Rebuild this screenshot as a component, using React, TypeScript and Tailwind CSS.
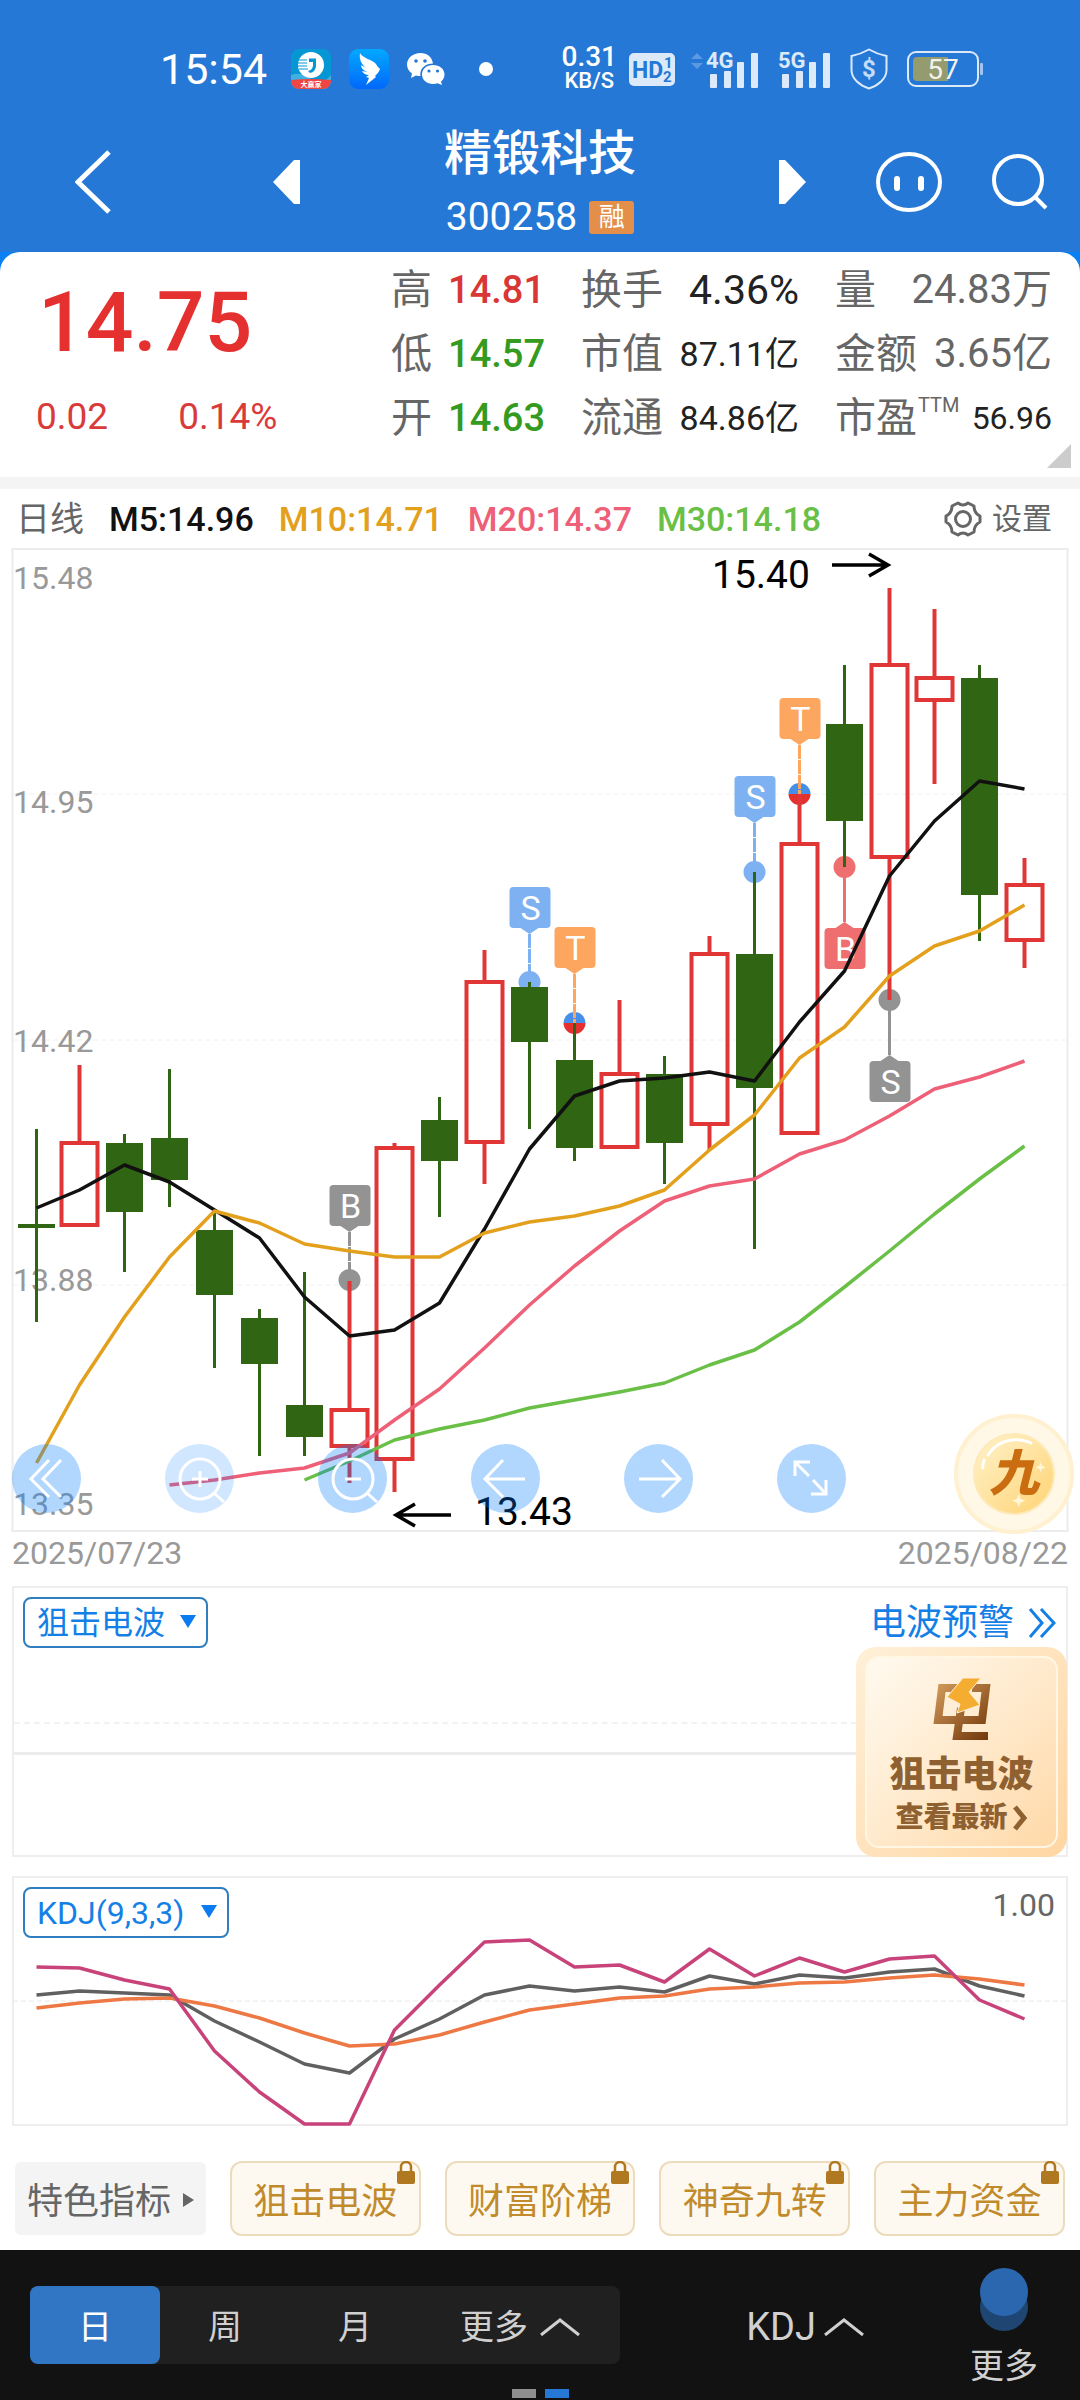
import React from "react";

type Candle = { up: boolean; high: number; top: number; bottom: number; low: number };

const candles: Candle[] = [
  { up: false, high: 1129, top: 1224, bottom: 1228, low: 1322 },
  { up: true, high: 1065, top: 1143, bottom: 1225, low: 1225 },
  { up: false, high: 1134, top: 1143, bottom: 1212, low: 1272 },
  { up: false, high: 1069, top: 1138, bottom: 1180, low: 1207 },
  { up: false, high: 1212, top: 1230, bottom: 1295, low: 1368 },
  { up: false, high: 1309, top: 1318, bottom: 1364, low: 1456 },
  { up: false, high: 1272, top: 1405, bottom: 1437, low: 1456 },
  { up: true, high: 1281, top: 1410, bottom: 1446, low: 1483 },
  { up: true, high: 1143, top: 1148, bottom: 1459, low: 1492 },
  { up: false, high: 1097, top: 1120, bottom: 1161, low: 1217 },
  { up: true, high: 950, top: 982, bottom: 1142, low: 1184 },
  { up: false, high: 982, top: 987, bottom: 1042, low: 1129 },
  { up: false, high: 1023, top: 1060, bottom: 1148, low: 1161 },
  { up: true, high: 1000, top: 1074, bottom: 1147, low: 1147 },
  { up: false, high: 1056, top: 1074, bottom: 1143, low: 1184 },
  { up: true, high: 936, top: 954, bottom: 1124, low: 1150 },
  { up: false, high: 872, top: 954, bottom: 1088, low: 1249 },
  { up: true, high: 794, top: 844, bottom: 1133, low: 1133 },
  { up: false, high: 665, top: 724, bottom: 821, low: 867 },
  { up: true, high: 588, top: 665, bottom: 857, low: 1000 },
  { up: true, high: 609, top: 678, bottom: 700, low: 784 },
  { up: false, high: 665, top: 678, bottom: 895, low: 941 },
  { up: true, high: 858, top: 885, bottom: 940, low: 968 },
];

const ma5 = [1208, 1190, 1165, 1182, 1210, 1238, 1297, 1336, 1330, 1303, 1229, 1149, 1096, 1081, 1078, 1072, 1081, 1022, 971, 876, 821, 781, 789];
const ma10 = [1463, 1385, 1317, 1257, 1211, 1223, 1244, 1251, 1257, 1257, 1233, 1222, 1216, 1206, 1190, 1150, 1115, 1058, 1027, 976, 946, 931, 905];
const ma20 = [1485, 1480, 1473, 1468, 1453, 1420, 1389, 1348, 1305, 1266, 1231, 1201, 1186, 1179, 1154, 1140, 1116, 1089, 1077, 1061];
const ma30 = [1480, 1461, 1440, 1429, 1420, 1408, 1400, 1392, 1383, 1365, 1350, 1322, 1287, 1251, 1214, 1179, 1146];

const lineJ = [1967, 1968, 1980, 1989, 2051, 2092, 2124, 2124, 2030, 1985, 1942, 1940, 1967, 1965, 1982, 1949, 1976, 1958, 1972, 1959, 1956, 2000, 2019];
const lineK = [1995, 1991, 1993, 1995, 2021, 2042, 2064, 2073, 2039, 2019, 1995, 1986, 1991, 1987, 1992, 1976, 1984, 1975, 1978, 1972, 1969, 1986, 1996];
const lineD = [2008, 2003, 1999, 1998, 2006, 2018, 2033, 2046, 2044, 2035, 2022, 2010, 2004, 1998, 1996, 1989, 1987, 1983, 1982, 1978, 1975, 1979, 1985];

const xAt = (i: number) => (i === 0 ? 36.5 : 34.5 + 45 * i);
const toPoints = (ys: number[], start = 0) => ys.map((y, i) => `${xAt(i + start)},${y}`).join(" ");

type MarkerProps = { index: number; letter: string; box: number; dot: number; color: string; split?: boolean };

function Marker({ index, letter, box, dot, color, split }: MarkerProps) {
  const x = xAt(index);
  const below = box > dot;
  const tip = below ? box - 6 : box + 47;
  return (
    <g>
      {split ? (
        <>
          <path d={`M${x - 11} ${dot}a11 11 0 0 1 22 0z`} fill="#458fea" />
          <path d={`M${x - 11} ${dot}a11 11 0 0 0 22 0z`} fill="#e53030" />
        </>
      ) : (
        <circle cx={x} cy={dot} r={11} fill={color} />
      )}
      <line x1={x} x2={x} y1={tip} y2={dot} stroke={color} strokeWidth={3} strokeDasharray={below ? undefined : "14 1"} />
      <rect x={x - 20} y={box} width={41} height={41} rx={4} fill={color} />
      {below ? (
        <path d={`M${x - 9} ${box}L${x} ${tip}L${x + 9} ${box}z`} fill={color} />
      ) : (
        <path d={`M${x - 9} ${box + 41}L${x} ${tip}L${x + 9} ${box + 41}z`} fill={color} />
      )}
      <text x={x + 1} y={box + 33} fontSize={34} textAnchor="middle" fill="#fff">{letter}</text>
    </g>
  );
}

function CandleChart() {
  return (
    <svg viewBox="0 548 1080 983" className="block w-full overflow-visible" role="img" aria-label="日线K线图">
      <rect x={12.5} y={549} width={1055} height={982} fill="none" stroke="#ececec" strokeWidth={2} />
      {[794, 1040, 1285].map((y) => (
        <line key={y} x1={13} x2={1067} y1={y} y2={y} stroke="#f0f0f0" strokeWidth={1} strokeDasharray="5 3" />
      ))}
      <g fontSize={32} fill="#999">
        <text x={13} y={589}>15.48</text>
        <text x={13} y={813}>14.95</text>
        <text x={13} y={1052}>14.42</text>
        <text x={13} y={1291}>13.88</text>
        <text x={13} y={1515}>13.35</text>
      </g>
      <Marker index={7} letter="B" box={1185} dot={1280} color="#939393" />
      <Marker index={11} letter="S" box={887} dot={982} color="#7eb1f1" />
      <Marker index={12} letter="T" box={927} dot={1023} color="#fda660" split />
      <Marker index={16} letter="S" box={776} dot={872} color="#7eb1f1" />
      <Marker index={17} letter="T" box={698} dot={794} color="#fda660" split />
      <Marker index={18} letter="B" box={928} dot={867} color="#ef6f70" />
      <Marker index={19} letter="S" box={1061} dot={1000} color="#939393" />
      {candles.map((c, i) => {
        const x = xAt(i);
        return c.up ? (
          <g key={i} stroke="#e03636" strokeWidth={4} fill="none">
            <line x1={x} x2={x} y1={c.high} y2={c.top} />
            <line x1={x} x2={x} y1={c.bottom} y2={c.low} />
            <rect x={x - 18} y={c.top} width={36} height={c.bottom - c.top} />
          </g>
        ) : (
          <g key={i} fill="#306613">
            <rect x={x - 1.5} y={c.high} width={3} height={c.low - c.high} />
            <rect x={x - 18.5} y={c.top} width={37} height={c.bottom - c.top} />
          </g>
        );
      })}
      <g fill="none" strokeWidth={3.5} strokeLinejoin="round">
        <polyline points={toPoints(ma30, 6)} stroke="#6abf47" />
        <polyline points={toPoints(ma20, 3)} stroke="#ee6077" />
        <polyline points={toPoints(ma5)} stroke="#111" />
        <polyline points={toPoints(ma10)} stroke="#e3a01d" />
      </g>
      <g fill="none" stroke="#000" strokeWidth={3.5}>
        <path d="M832 565H888M869 554L888 565L869 576" />
        <path d="M451 1515H396M415 1504L396 1515L415 1526" />
      </g>
      <g fontSize={39} fill="#000">
        <text x={712} y={588}>15.40</text>
        <text x={475} y={1525}>13.43</text>
      </g>
    </svg>
  );
}

function SignalBars({ label, data }: { label: string; data?: boolean }) {
  return (
    <svg
      viewBox={data ? "0 0 68 40" : "15 0 53 40"}
      className={data ? "h-10 w-[68px]" : "h-10 w-[53px]"}
      aria-label={label}
    >
      {data && <path d="M0 10L6 4L12 10zM0 14L6 20L12 14z" fill="#5b9ae2" />}
      <g fill="#dbe9f9">
        <text x={15} y={19} fontSize={22} fontWeight={700}>{label}</text>
        <rect x={19} y={25} width={7} height={14} rx={1} />
        <rect x={33} y={22} width={7} height={17} rx={1} />
        <rect x={46} y={13} width={7} height={26} rx={1} />
        <rect x={60} y={4} width={7} height={35} rx={1} />
      </g>
    </svg>
  );
}

function StatusBar() {
  return (
    <div className="flex h-[100px] items-center justify-between pt-[38px] pr-[97px] pl-[160px] text-white">
      <div className="flex items-center">
        <span className="mr-6 text-[43px] leading-[50px]">15:54</span>
        <svg viewBox="0 0 40 40" className="mr-[18px] size-10" aria-label="大赢家">
          <defs>
            <clipPath id="appClip"><rect width={40} height={40} rx={8} /></clipPath>
          </defs>
          <g clipPath="url(#appClip)">
            <rect width={40} height={40} fill="#0596d4" />
            <path d="M0 26Q10 22 20 30T40 26V40H0z" fill="#3fb0df" />
            <circle cx={20} cy={16} r={13} fill="#fff" />
            <path d="M18 9.500H25V17A7 7 0 0 1 19 24L17 22Q22 21 22 16V13H18z" fill="#0596d4" />
            <path d="M7 11H16M7 14H16M7 17H16M8 20H17" stroke="#0596d4" strokeWidth={1.200} />
            <path d="M0 31Q20 29 40 31V40H0z" fill="#ef4545" />
            <text x={20} y={38} fontSize={7} fontWeight={700} textAnchor="middle" fill="#fff">大赢家</text>
          </g>
        </svg>
        <svg viewBox="0 0 40 40" className="mr-[18px] size-10" aria-label="钉钉">
          <defs>
            <linearGradient id="ding" x1="0" y1="0" x2="0" y2="1">
              <stop offset="0" stopColor="#02a9ff" />
              <stop offset="1" stopColor="#0168fb" />
            </linearGradient>
          </defs>
          <rect width={40} height={40} rx={9} fill="url(#ding)" />
          <path d="M11 4C13 9 24 11 27 15C28 17 30 19 31 20C30 23 28 25 26 27L27 28L17 36L20 29L17 28L20 26C16 26 14 24 13 22L18 23C14 21 12 19 12 16L17 19C12 15 10 10 11 4z" fill="#fff" />
        </svg>
        <svg viewBox="0 0 38 32" className="mr-[34px] h-8 w-[38px]" aria-label="微信">
          <path d="M13.500 0C6 0 0 5 0 11.500C0 15.500 2 18.500 5 20.500L4 25L9 22.500Q11 23 13.500 23Q13 21 13.500 19C15 13.500 20 10.500 26 10.500C25 4 20 0 13.500 0z" fill="#fff" />
          <path d="M26 12C19.500 12 15 16 15 21.500C15 27 20 31 26 31Q28.500 31 30.500 30.300L35 32L34 28.500C36 27 37.500 24.500 37.500 21.500C37.500 16 32.500 12 26 12z" fill="#fff" />
          <g fill="#2578d5">
            <circle cx={9} cy={8} r={1.800} /><circle cx={18} cy={8} r={1.800} />
            <circle cx={22} cy={18} r={1.600} /><circle cx={30.500} cy={18} r={1.600} />
          </g>
        </svg>
        <span className="size-[14px] rounded-full bg-white" />
      </div>
      <div className="flex items-center gap-[19px]">
        <div className="-mr-[3px] flex items-center gap-3">
          <div className="flex flex-col items-center font-medium">
            <span className="text-[28px] leading-[24px]">0.31</span>
            <span className="text-[22px] leading-[24px]">KB/S</span>
          </div>
          <svg viewBox="0 0 46 33" className="h-[33px] w-[46px]" aria-label="HD">
            <rect width={46} height={33} rx={5} fill="#dbe9f9" />
            <g fill="#2578d5" fontWeight={700}>
              <text x={3} y={25} fontSize={23}>HD</text>
              <text x={35} y={15} fontSize={15}>1</text>
              <text x={34} y={29} fontSize={15}>2</text>
            </g>
          </svg>
        </div>
        <SignalBars label="4G" data />
        <SignalBars label="5G" />
        <svg viewBox="0 0 38 42" className="h-[42px] w-[38px]" aria-label="支付保护">
          <path d="M19 1.500Q27 6 36.500 8V22C36.500 31 28 37.500 19 40.500C10 37.500 1.500 31 1.500 22V8Q11 6 19 1.500z" fill="none" stroke="#dbe9f9" strokeWidth={2} />
          <text x={19} y={29} fontSize={24} fontWeight={700} textAnchor="middle" fill="#c4dcf8">$</text>
        </svg>
        <svg viewBox="0 0 76 36" className="h-9 w-[76px]" aria-label="电量57%">
          <rect x={1} y={1} width={70} height={34} rx={8} fill="none" stroke="#dbe9f9" strokeWidth={2} />
          <path d="M10 6H41V30H10A4 4 0 0 1 6 26V10A4 4 0 0 1 10 6z" fill="#949b6e" />
          <rect x={73} y={12} width={3} height={12} rx={1} fill="#9fc4ef" />
          <text x={36} y={28} fontSize={28} textAnchor="middle" fill="#f2f2ea">57</text>
        </svg>
      </div>
    </div>
  );
}

function TitleBar() {
  return (
    <div className="grid h-[152px] grid-cols-[1fr_auto_1fr] items-center pt-3 text-white">
      <div className="flex items-center justify-between pr-[144px] pl-[75px]">
        <button aria-label="返回">
          <svg viewBox="0 0 36 64" className="h-16 w-9"><path d="M34 2L3 32L34 62" fill="none" stroke="#fff" strokeWidth={5} /></svg>
        </button>
        <button aria-label="上一只">
          <svg viewBox="0 0 27 44" className="h-11 w-[27px]"><path d="M27 0H21L0 22L21 44H27z" fill="#fff" /></svg>
        </button>
      </div>
      <div className="flex flex-col items-center pt-[10px]">
        <h1 className="text-[48px] leading-[60px] font-medium">精锻科技</h1>
        <div className="flex items-center gap-3">
          <span className="text-[39px] leading-[66px]">300258</span>
          <span className="h-[33px] w-[45px] rounded-[3px] bg-[#e38f4a] text-center text-[26px] leading-[33px]">融</span>
        </div>
      </div>
      <div className="flex items-center justify-between pr-[32px] pl-[143px]">
        <button aria-label="下一只">
          <svg viewBox="0 0 27 44" className="h-11 w-[27px]"><path d="M0 0H6L27 22L6 44H0z" fill="#fff" /></svg>
        </button>
        <div className="flex items-center gap-[50px]">
          <button aria-label="助手">
            <svg viewBox="0 0 66 60" className="h-[60px] w-[66px]">
              <ellipse cx={33} cy={30} rx={31} ry={28} fill="none" stroke="#fff" strokeWidth={4} />
              <path d="M21 27V36M45 27V36" stroke="#fff" strokeWidth={6} strokeLinecap="round" />
            </svg>
          </button>
          <button aria-label="搜索">
            <svg viewBox="0 0 56 56" className="size-14">
              <circle cx={26} cy={26} r={24} fill="none" stroke="#fff" strokeWidth={4} />
              <path d="M42 42L54 54" stroke="#fff" strokeWidth={4} />
            </svg>
          </button>
        </div>
      </div>
    </div>
  );
}

function Quote({ label, sup, value, tone }: { label: string; sup?: string; value: string; tone: string }) {
  return (
    <div className="flex h-16 items-center justify-between">
      <dt className="flex text-[41px] leading-[60px] whitespace-nowrap text-[#666]">
        {label}
        {sup && <span className="pl-px text-[20px] leading-[34px]">{sup}</span>}
      </dt>
      <dd className={tone}>{value}</dd>
    </div>
  );
}

function Summary() {
  const price = "text-[38px] leading-[60px] whitespace-nowrap font-medium";
  return (
    <section className="relative flex rounded-t-[20px] bg-white pt-[6px] pr-7 pb-[27px]">
      <div className="flex-1 text-[#e53030]">
        <div className="pl-[38px] text-[84px] leading-[130px] font-medium">14.75</div>
        <div className="flex gap-[70px] pl-[36px] text-[37px] leading-[58px] text-[#d93a3a]">
          <span>0.02</span>
          <span>0.14%</span>
        </div>
      </div>
      <dl className="grid grid-cols-[154px_218px_217px] gap-x-9">
        <Quote label="高" value="14.81" tone={`${price} text-[#d93636]`} />
        <Quote label="换手" value="4.36%" tone="text-[41px] leading-[60px] whitespace-nowrap text-[#222]" />
        <Quote label="量" value="24.83万" tone="text-[40px] leading-[60px] whitespace-nowrap text-[#666]" />
        <Quote label="低" value="14.57" tone={`${price} text-[#359a20]`} />
        <Quote label="市值" value="87.11亿" tone="text-[34px] leading-[60px] whitespace-nowrap text-[#222]" />
        <Quote label="金额" value="3.65亿" tone="text-[40px] leading-[60px] whitespace-nowrap text-[#666]" />
        <Quote label="开" value="14.63" tone={`${price} text-[#359a20]`} />
        <Quote label="流通" value="84.86亿" tone="text-[34px] leading-[60px] whitespace-nowrap text-[#222]" />
        <Quote label="市盈" sup="TTM" value="56.96" tone="text-[32px] leading-[60px] whitespace-nowrap text-[#222]" />
      </dl>
      <svg viewBox="0 0 24 24" className="absolute right-[9px] bottom-[9px] size-6"><path d="M24 0V24H0z" fill="#ccc" /></svg>
    </section>
  );
}

function AverageRow() {
  return (
    <div className="flex h-[59px] items-center justify-between pt-px pr-7 pl-4">
      <div className="flex items-center gap-[25px] text-[34px] leading-[48px] font-medium">
        <span className="font-normal text-[#666]">日线</span>
        <span className="text-[#111]">M5:14.96</span>
        <span className="text-[#e3a01d]">M10:14.71</span>
        <span className="text-[#ee6077]">M20:14.37</span>
        <span className="text-[#6abf47]">M30:14.18</span>
      </div>
      <button className="flex items-center gap-[10px] text-[30px] leading-[48px] text-[#666]">
        <svg viewBox="0 0 38 38" className="size-[38px]" fill="none" stroke="#666" strokeWidth={3} strokeLinejoin="round">
          <path d="M14 3Q19 7 24 3L30 6Q30 13 36 16V22Q30 25 30 32L24 35Q19 31 14 35L8 32Q8 25 2 22V16Q8 13 8 6z" />
          <circle cx={19} cy={19} r={7.500} />
        </svg>
        设置
      </button>
    </div>
  );
}

function RoundButton({ label, faint, children }: { label: string; faint?: boolean; children: React.ReactNode }) {
  return (
    <button
      aria-label={label}
      className={faint ? "size-[69px] rounded-full bg-[#007aff]/18" : "size-[69px] rounded-full bg-[#007aff]/30"}
    >
      <svg viewBox="0 0 69 69" className="size-[69px]" fill="none" stroke="#fff" strokeWidth={3}>
        {children}
      </svg>
    </button>
  );
}

function ChartTools() {
  return (
    <>
      <div className="absolute bottom-[18px] left-3 flex gap-[84px]">
        <RoundButton label="最早"><path d="M37 16L19 35L37 53M49 16L31 35L49 53" /></RoundButton>
        <RoundButton label="放大" faint><circle cx={35} cy={35} r={20} /><path d="M27 35H43M35 27V43M49 49L59 58" /></RoundButton>
        <RoundButton label="缩小"><circle cx={35} cy={35} r={20} /><path d="M27 35H43M49 49L59 58" /></RoundButton>
        <RoundButton label="左移"><path d="M54 35H14M32 16L14 35L32 53" /></RoundButton>
        <RoundButton label="右移"><path d="M15 35H55M38 16L56 35L38 53" /></RoundButton>
        <RoundButton label="全屏"><path d="M33 18H18V32M18 18L32 32M34 50H49V36M49 50L36 36" /></RoundButton>
      </div>
      <button
        aria-label="神奇九转"
        className="absolute right-[6px] -bottom-[3px] flex size-[120px] items-center justify-center rounded-full border-4 border-[#fff0d0] bg-[#fff8e6]"
      >
        <span className="relative flex size-[82px] items-center justify-center rounded-full border-2 border-[#fdeab8] bg-linear-to-br from-[#fff2c8] to-[#ffd372] text-[50px] leading-[60px] font-black text-[#c96d10] italic">
          九
          <svg viewBox="0 0 82 82" className="absolute inset-0 size-full" fill="none">
            <path d="M13 22Q23 6 42 5Q52 5 60 9" stroke="#fff" strokeWidth={3} />
            <path d="M8 36Q8 30 10 25" stroke="#fff" strokeWidth={3} />
            <path d="M46 62L48 67L53 69L48 71L46 76L44 71L39 69L44 67zM69 28L70 32L74 34L70 36L69 40L68 36L64 34L68 32z" fill="#fff7d8" />
          </svg>
        </span>
      </button>
    </>
  );
}

function IndicatorSelect({ id, label, value, width }: { id: string; label: string; value: string; width: string }) {
  return (
    <div className="absolute top-[9px] left-[9px]">
      <label htmlFor={id} className="sr-only">{label}</label>
      <select
        id={id}
        className={`${width} block h-[51px] appearance-none rounded-lg border-2 border-[#2f7fc0] bg-white pl-3 text-[32px] text-[#1480e6]`}
      >
        <option>{value}</option>
      </select>
      <svg viewBox="0 0 16 13" className="pointer-events-none absolute top-[18px] right-3 h-[13px] w-4"><path d="M0 0H16L8 13z" fill="#0a7cf0" /></svg>
    </div>
  );
}

function WavePanel() {
  return (
    <section className="relative mx-3 h-[271px] border-2 border-[#eee]">
      <div className="absolute inset-x-0 top-[134px] border-t-2 border-dashed border-[#f2f2f2]" />
      <div className="absolute inset-x-0 top-[164px] h-[3px] bg-[#ececec]" />
      <IndicatorSelect id="wave" label="副图指标一" value="狙击电波" width="w-[185px]" />
      <a href="#alert" className="absolute top-[11px] right-[10px] flex items-center gap-[14px] text-[36px] leading-[48px] text-[#1480e6]">
        电波预警
        <svg viewBox="0 0 28 30" className="h-[30px] w-7" fill="none" stroke="#1480e6" strokeWidth={3}><path d="M2 1L14 15L2 29M13 1L26 15L13 29" /></svg>
      </a>
      <a
        href="#latest"
        className="absolute -right-px -bottom-[2px] block h-[210px] w-[211px] rounded-[20px] bg-linear-to-br from-[#fff0d8] to-[#ffd6a2] p-[9px] font-black text-[#8f6030]"
      >
        <span className="flex h-full flex-col items-center rounded-[14px] border-2 border-[#fff6e4] bg-linear-to-br from-[#fffaf0] to-[#ffd9a8] pt-[20px]">
          <svg viewBox="0 0 60 64" className="mb-[10px] h-16 w-[60px] shrink-0" fill="none">
            <defs>
              <linearGradient id="emblem" x1="0" y1="0" x2="60" y2="64" gradientUnits="userSpaceOnUse">
                <stop offset="0" stopColor="#dca363" />
                <stop offset="1" stopColor="#6b3205" />
              </linearGradient>
            </defs>
            <path d="M26 10H10L6 42H50L54 10H40M29 30L25 58H56" stroke="url(#emblem)" strokeWidth={8} />
            <path d="M31 0H49L37 14L48 27L25 35L28 26L15 19z" fill="#f5ad31" stroke="#ffeed6" strokeWidth={1} />
          </svg>
          <span className="text-[36px] leading-[46px]">狙击电波</span>
          <span className="flex items-center gap-1 text-[28px] leading-[40px]">
            查看最新
            <svg viewBox="0 0 16 26" className="h-[26px] w-4" fill="none" stroke="#8f6030" strokeWidth={5}><path d="M3 2L12 13L3 24" /></svg>
          </span>
        </span>
      </a>
    </section>
  );
}

function KdjPanel() {
  return (
    <section className="relative mx-3 mt-[19px]">
      <svg viewBox="12 1876 1056 250" className="block w-full" role="img" aria-label="KDJ指标">
        <rect x={13} y={1877} width={1054} height={248} fill="none" stroke="#eee" strokeWidth={2} />
        <line x1={13} x2={1067} y1={2001} y2={2001} stroke="#e8e8e8" strokeWidth={1} strokeDasharray="5 3" />
        <g fill="none" strokeWidth={3.5} strokeLinejoin="round">
          <polyline points={toPoints(lineK)} stroke="#606060" />
          <polyline points={toPoints(lineD)} stroke="#ee7844" />
          <polyline points={toPoints(lineJ)} stroke="#c9437b" />
        </g>
        <text x={1055} y={1916} fontSize={32} textAnchor="end" fill="#666">1.00</text>
      </svg>
      <div className="absolute top-[2px] left-[2px]">
        <IndicatorSelect id="kdj" label="副图指标二" value="KDJ(9,3,3)" width="w-[206px]" />
      </div>
    </section>
  );
}

function FeatureChips() {
  return (
    <div className="mt-[35px] mb-[14px] grid grid-cols-5 items-center gap-6 px-[15px] text-[36px] leading-[52px] whitespace-nowrap">
      <button className="flex h-[73px] items-center justify-center gap-3 rounded-md bg-[#f4f4f4] pt-[6px] text-[#666]">
        特色指标
        <svg viewBox="0 0 11 14" className="mb-1 h-[14px] w-[11px]"><path d="M0 0L11 7L0 14z" fill="#666" /></svg>
      </button>
      {["狙击电波", "财富阶梯", "神奇九转", "主力资金"].map((name) => (
        <button key={name} className="relative h-[75px] rounded-xl border-2 border-[#ecdcbc] bg-[#fdf9f1] pt-[6px] text-[#c18b2c]">
          {name}
          <svg viewBox="0 0 18 23" className="absolute -top-[2px] right-[4px] h-[23px] w-[18px]">
            <path d="M4 10V6A5 5 0 0 1 14 6V10" fill="none" stroke="#b07820" strokeWidth={2.500} />
            <rect y={10} width={18} height={13} rx={2} fill="#b07820" />
          </svg>
        </button>
      ))}
    </div>
  );
}

function Caret() {
  return (
    <svg viewBox="0 0 40 18" className="h-[18px] w-10" fill="none" stroke="#d0d0d0" strokeWidth={3}><path d="M1 17L20 2L39 17" /></svg>
  );
}

function BottomBar() {
  return (
    <nav className="relative flex h-[150px] items-start justify-between bg-[#121212] pr-[42px] pl-[30px] text-[34px] leading-[48px] text-[#d0d0d0]">
      <div className="mt-9 flex h-[78px] rounded-lg bg-[#202020]">
        <button className="w-[130px] rounded-lg bg-[#3176c4] pt-1 text-white">日</button>
        <button className="w-[130px] pt-1">周</button>
        <button className="w-[130px] pt-1">月</button>
        <button className="flex w-[200px] items-center justify-center gap-3 pt-1">更多<Caret /></button>
      </div>
      <button className="mt-9 flex h-[78px] items-center gap-2 pt-1 pl-[20px] text-[38px]">KDJ<Caret /></button>
      <button className="mt-[18px] flex flex-col items-center">
        <svg viewBox="0 0 48 64" className="h-16 w-12">
          <circle cx={24} cy={39} r={24} fill="#1f4672" />
          <circle cx={24} cy={24} r={24} fill="#2b67af" />
        </svg>
        <span className="pt-[10px]">更多</span>
      </button>
      <div className="absolute inset-x-0 bottom-[2px] flex justify-center gap-[9px]">
        <span className="h-[9px] w-6 bg-[#8f8f8f]" />
        <span className="h-[9px] w-6 bg-[#2578d5]" />
      </div>
    </nav>
  );
}

export default function App() {
  return (
    <div className="min-h-screen bg-white font-['Roboto','Noto_Sans_CJK_SC',sans-serif]">
      <header className="bg-[#2578d5]">
        <StatusBar />
        <TitleBar />
      </header>
      <main>
        <div className="bg-[#0a80f5]">
          <Summary />
        </div>
        <div className="h-3 bg-[#f4f4f4]" />
        <AverageRow />
        <section className="relative">
          <CandleChart />
          <ChartTools />
        </section>
        <div className="flex h-[55px] items-start justify-between px-3 text-[32px] leading-[44px] text-[#999]">
          <span>2025/07/23</span>
          <span>2025/08/22</span>
        </div>
        <WavePanel />
        <KdjPanel />
        <FeatureChips />
      </main>
      <BottomBar />
    </div>
  );
}
